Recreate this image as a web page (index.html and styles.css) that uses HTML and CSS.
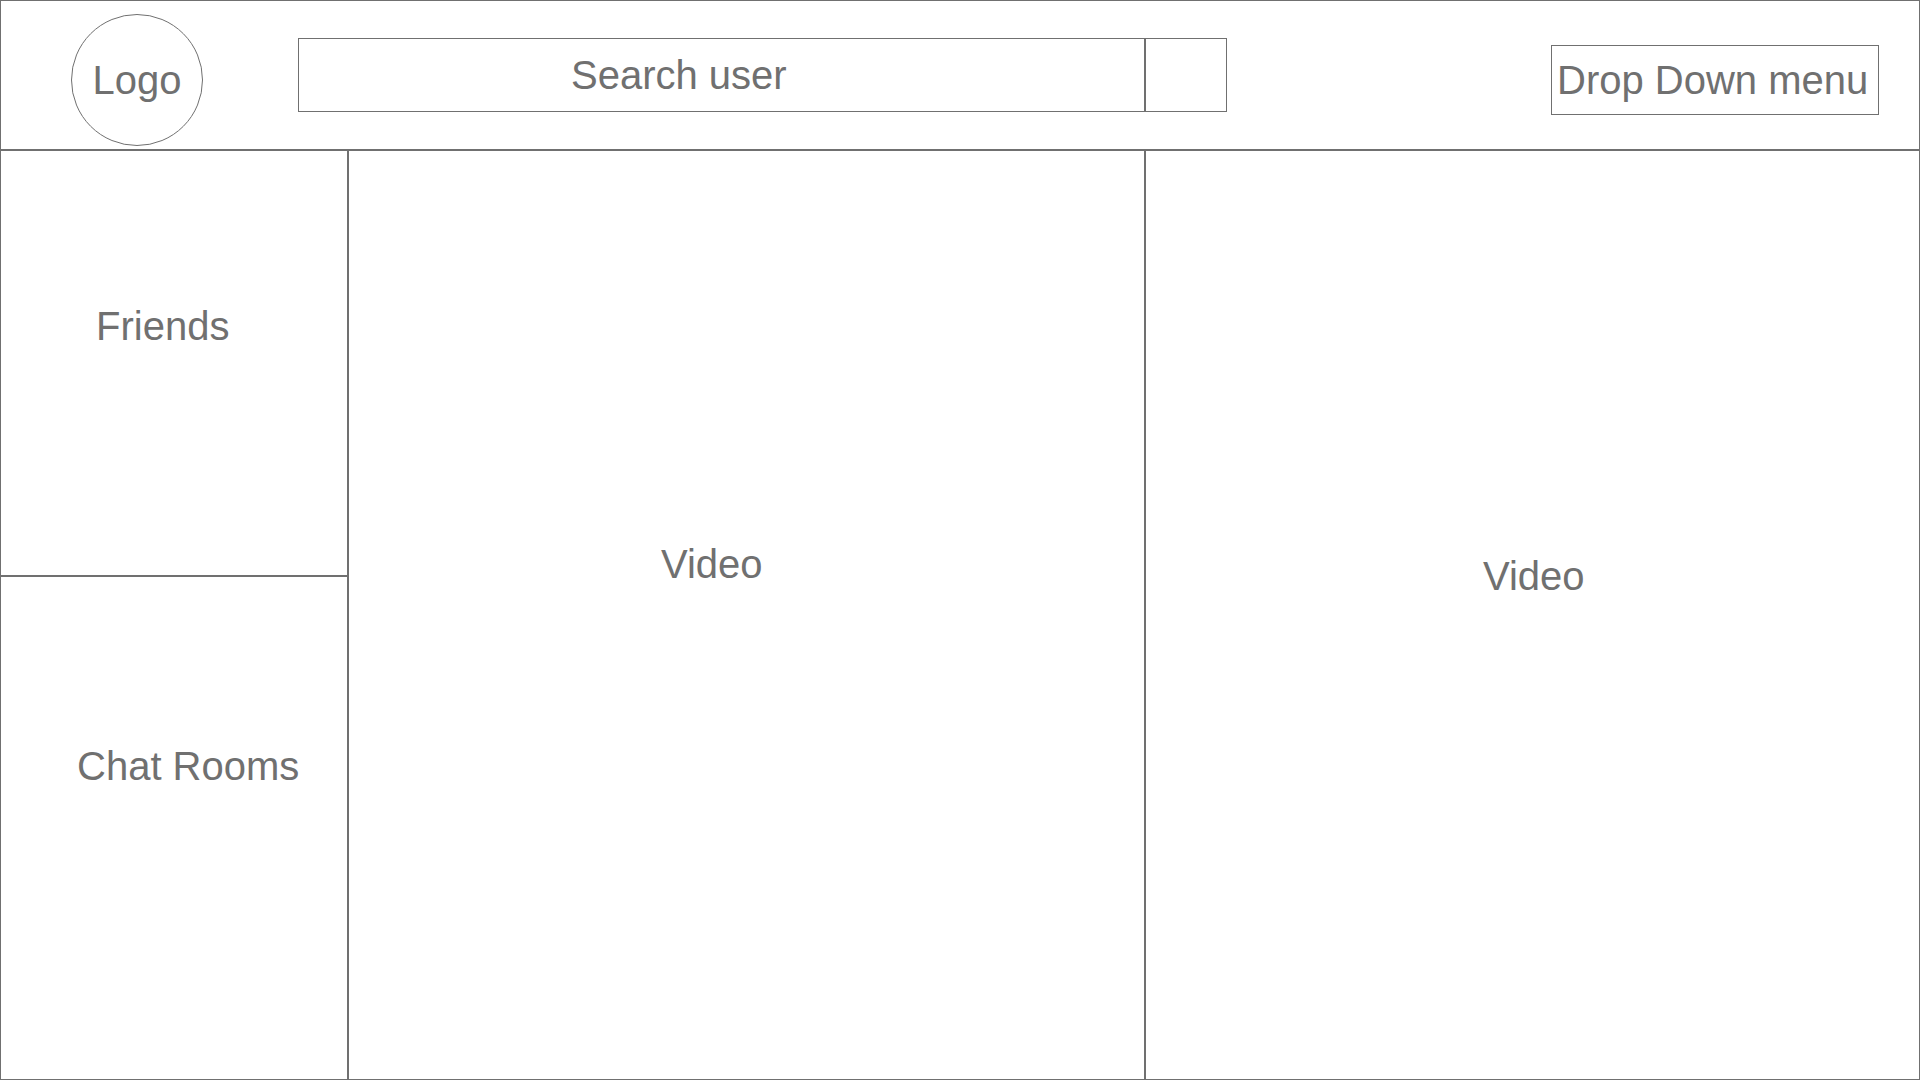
FILE: index.html
```html
<!DOCTYPE html>
<html lang="en">
<head>
  <meta charset="utf-8">
  <meta name="viewport" content="width=device-width, initial-scale=1">
  <title>Video chat</title>
  <link rel="stylesheet" href="styles.css">
</head>
<body>
  <div class="app">
    <header class="header">
      <a class="logo" href="#">Logo</a>
      <form class="search" role="search">
        <input class="search-input" type="search" placeholder="Search user" aria-label="Search user">
        <button class="search-button" type="submit" aria-label="Search"></button>
      </form>
      <select class="menu" aria-label="Menu">
        <option>Drop Down menu</option>
      </select>
    </header>
    <div class="content">
      <aside class="sidebar">
        <section class="panel friends"><h2 class="label">Friends</h2></section>
        <section class="panel rooms"><h2 class="label">Chat Rooms</h2></section>
      </aside>
      <main class="videos">
        <section class="panel video-main"><h2 class="label">Video</h2></section>
        <section class="panel video-side"><h2 class="label">Video</h2></section>
      </main>
    </div>
  </div>
</body>
</html>
```
FILE: styles.css
```css
* {
  box-sizing: border-box;
}

body {
  margin: 0;
  background: #fff;
  color: #707070;
  font: 40px/48px "Liberation Sans", Arial, sans-serif;
}

.app {
  display: flex;
  flex-direction: column;
  min-height: 100vh;
  border: 1px solid #707070;
}

.header {
  display: flex;
  align-items: center;
  height: 150px;
  padding: 0 40px 0 70px;
  border-bottom: 2px solid #707070;
}

.logo {
  display: flex;
  flex: none;
  align-items: center;
  justify-content: center;
  width: 132px;
  height: 132px;
  margin-top: 10px;
  border: 1px solid #707070;
  border-radius: 50%;
  color: inherit;
  text-decoration: none;
}

.search {
  display: flex;
  flex: 1;
  min-width: 0;
  height: 74px;
  margin: 0 324px 0 95px;
  border: 1px solid #707070;
}

.search-input {
  flex: 1;
  min-width: 0;
  padding: 0 0 0 272px;
  border: 0;
  outline: 0;
  background: transparent;
  color: inherit;
  font: inherit;
  appearance: none;
}

.search-input::placeholder {
  color: inherit;
  opacity: 1;
}

.search-button {
  flex: none;
  width: 82px;
  padding: 0;
  border: 0;
  border-left: 2px solid #707070;
  background: transparent;
}

.menu {
  flex: none;
  width: 328px;
  height: 70px;
  margin: 10px 0 0;
  padding: 0 5px;
  border: 1px solid #707070;
  border-radius: 0;
  background: transparent;
  color: inherit;
  font: inherit;
  appearance: none;
}

.content {
  display: grid;
  flex: 1;
  grid-template-columns: 348px 1fr;
}

.sidebar {
  display: grid;
  grid-template-rows: 426fr 502fr;
  border-right: 2px solid #707070;
}

.videos {
  display: grid;
  grid-template-columns: 797fr 773fr;
}

.label {
  margin: 0;
  font: inherit;
}

.friends {
  padding: 151px 0 0 95px;
  border-bottom: 2px solid #707070;
}

.rooms {
  padding: 165px 0 0 76px;
}

.video-main {
  padding: 389px 0 0 312px;
  border-right: 2px solid #707070;
}

.video-side {
  padding: 401px 0 0 337px;
}
```
